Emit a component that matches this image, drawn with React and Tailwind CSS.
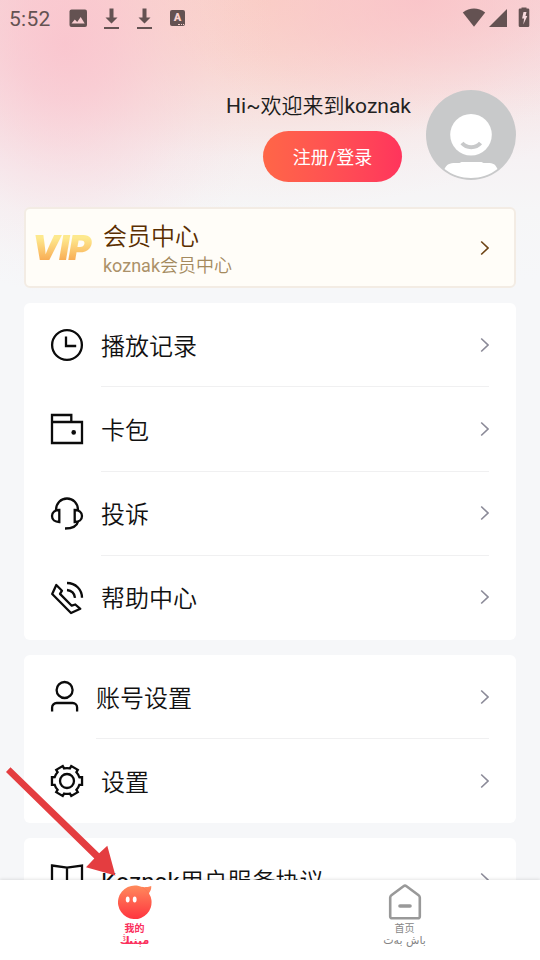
import React from "react";

const font = "font-[Roboto,'Noto_Sans_CJK_SC',sans-serif]";

function Chevron({ className = "text-[#8b8a98]" }) {
  return (
    <svg width="9" height="16" viewBox="0 0 9 16" fill="none" className={className}>
      <path d="M1.200 1.500l6.800 6.500-6.800 6.500" stroke="currentColor" strokeWidth="1.600" />
    </svg>
  );
}

function Icon({ w = 32, h = 32, children }) {
  return (
    <svg
      width={w}
      height={h}
      viewBox={`0 0 ${w} ${h}`}
      fill="none"
      stroke="#0b0b0b"
      strokeWidth="2.3"
      className="shrink-0 overflow-visible"
    >
      {children}
    </svg>
  );
}

const ClockIcon = () => (
  <Icon>
    <circle cx="16" cy="16" r="14.900" />
    <path d="M15 7.500V17h10.200" />
  </Icon>
);

const WalletIcon = () => (
  <Icon>
    <path d="M1 9h30v21H1zM1 9V2h19.300v7" />
    <circle cx="22.700" cy="19.400" r="2.300" fill="#0b0b0b" stroke="none" />
  </Icon>
);

const HeadsetIcon = () => (
  <Icon>
    <g transform="translate(0 -0.500)">
      <path d="M5 12.500C5 6 9.800 1 16 1s11 5 11 11.500" />
      <path d="M8.300 12.500v12C4 24.500 1 22.300 1 18.500s3-6 7.300-6z" />
      <path d="M23.700 12.500v12c4.300 0 7.300-2.200 7.300-6s-3-6-7.300-6z" />
      <path d="M27 24c-1 4.500-5.500 7-13 7" />
    </g>
  </Icon>
);

const PhoneIcon = () => (
  <Icon>
    <path d="M5.300 3L11 8.700l-2 3.200 11.700 11.800 3.600-1.200 5 4.300L20 31 1.200 12z" strokeLinejoin="round" />
    <path d="M16 1c8.500 0 15 6.500 15 14.800M16 8c4.500.5 7.500 3.500 8 7.800" />
  </Icon>
);

const UserIcon = () => (
  <Icon w={27} h={32}>
    <circle cx="13.600" cy="9" r="8" />
    <path d="M1.100 30.500v-4a4.500 4.500 0 0 1 4.500-4.500h16a4.500 4.500 0 0 1 4.500 4.500v4" />
  </Icon>
);

const at = (deg, r) => {
  const a = (deg * Math.PI) / 180;
  return `${(16 + r * Math.cos(a)).toFixed(2)} ${(16 + r * Math.sin(a)).toFixed(2)}`;
};
const gearPath =
  [0, 60, 120, 180, 240, 300]
    .map(
      (d, i) =>
        `${i ? "A12.5 12.5 0 0 1" : "M"}${at(d - 17, 12.9)}L${at(d - 14, 15.5)}L${at(d + 14, 15.5)}L${at(d + 17, 12.9)}`
    )
    .join("") + `A12.5 12.5 0 0 1 ${at(-17, 12.9)}Z`;

const GearIcon = () => (
  <Icon>
    <path d={gearPath} />
    <circle cx="16" cy="16" r="7" />
  </Icon>
);

const BookIcon = () => (
  <Icon>
    <path d="M1 1.500l15 2.200 15-2.200v26l-15 2.500-15-2.500zM16 3.700V30" />
  </Icon>
);

function Row({ icon, label, last }) {
  return (
    <div className="flex h-[84.25px] items-center pl-[27px]">
      {icon}
      <div
        className={`ml-[18px] mr-[27px] flex h-full flex-1 items-center justify-between border-b ${
          last ? "border-transparent" : "border-[#f0f0f1]"
        }`}
      >
        <span className="whitespace-nowrap pt-[4px] text-2xl font-[350] leading-8 text-[#111]">{label}</span>
        <Chevron />
      </div>
    </div>
  );
}

function StatusBar() {
  return (
    <div className="flex h-9 items-center justify-between pl-[9px] pr-[10px] text-[#645252]">
      <div className="flex items-center">
        <span className="w-[60px] pt-[2px] text-[21px] leading-[34px] tracking-[0.3px]">5:52</span>
        <svg width="18" height="18" viewBox="0 0 18 18">
          <rect x="0.500" y="0.500" width="17.500" height="17.500" rx="2" fill="currentColor" />
          <path d="M2.500 14.500l3.300-4 2.400 2.500 3.500-5 4 6.500z" fill="#f8ccd0" />
        </svg>
        {[0, 1].map((i) => (
          <svg key={i} width="16" height="22" viewBox="0 0 16 22" className="ml-[17px]" fill="currentColor">
            <path d="M5.500 1.500h4v9h4l-6 6-6-6h4zM.0 20h15v2H0z" />
          </svg>
        ))}
        <div className="relative ml-[17px] flex h-4 w-[15px] items-center justify-center rounded-[2px] bg-[#645252] pb-[1px] text-[11px] font-black leading-none text-[#f9d3cf]">
          A
          <span className="absolute bottom-[1px] right-[1px] h-px w-[6px] border-t border-dotted border-[#f9d3cf]" />
        </div>
      </div>
      <svg width="68" height="22" viewBox="0 0 68 22" fill="currentColor">
        <path d="M.8 5.500C7.500.3 16.500.3 23.200 5.500L12 19.700z" />
        <path d="M45 2v18H27z" />
        <path d="M59.500 1.500V.5h5v1h1.500a1.300 1.300 0 0 1 1.300 1.300v15.900A1.300 1.300 0 0 1 66 20h-8a1.300 1.300 0 0 1-1.300-1.300V2.800A1.300 1.300 0 0 1 58 1.500z" />
        <path d="M61.500 5h3l-1 4h1.800l-4 8.500.8-6h-2z" fill="#f7dadd" />
      </svg>
    </div>
  );
}

function Avatar() {
  return (
    <svg width="90" height="90" viewBox="0 0 90 90">
      <circle cx="45" cy="45" r="45" fill="#c8c9ca" />
      <circle cx="45" cy="44.800" r="20.800" fill="#fff" />
      <path d="M36 53c4.500 5.500 14 5.500 18.500 0" fill="none" stroke="#c8c9ca" strokeWidth="4" />
      <path d="M18.500 79c2-4.500 5-6 11-6h4l2-1h20l2 1h4c6 0 8 1.500 10 6-15 12-38 12-53 0z" fill="#fff" />
    </svg>
  );
}

function NavItem({ icon, zh, ug, className }) {
  return (
    <div className={`flex flex-1 flex-col items-center pr-px pt-1 ${className}`}>
      {icon}
      <span className="mt-[3px] text-[10px] leading-[10px]">{zh}</span>
      <span dir="rtl" className="mt-[1px] font-['DejaVu_Sans',sans-serif] text-[11px] leading-[12px]">
        {ug}
      </span>
    </div>
  );
}

export default function App() {
  return (
    <div
      className={`relative flex h-[960px] w-[540px] flex-col overflow-hidden bg-[#f6f7f9] ${font} bg-[radial-gradient(ellipse_210px_250px_at_65px_45px,#fac1cccc_0%,#fac3cea8_22%,#f9c9d270_45%,#f8d2da33_70%,#f8d8df0f_88%,#f8dde300_100%),radial-gradient(ellipse_260px_130px_at_420px_0px,#fac1c7cc_0%,#fac2c890_30%,#fac4ca48_60%,#fac4c914_85%,#fac4c900_100%),radial-gradient(ellipse_400px_210px_at_260px_0px,#fad0c4f5_0%,#fad2c7c8_25%,#f9d6cd78_50%,#f8dcd62c_75%,#f8e0dc00_100%),linear-gradient(180deg,#f7dade_0px,#f6e3e6_60px,#f6ebed_110px,#f6f2f4_160px,#f6f6f7_210px,#f6f7f9_280px)]`}
    >
      <StatusBar />

      <header className="flex justify-end gap-[15px] pr-6 pt-[54px]">
        <div className="flex flex-col items-end">
          <span className="h-[41px] text-[21px] leading-[32px] text-[#222]">
            Hi~<span className="font-[350] text-[#1a1a1a]">欢迎来到</span>koznak
          </span>
          <button className="mr-[9px] h-[51px] w-[139px] rounded-full bg-linear-to-r from-[#ff6647] to-[#ff345c] pt-[2px] text-lg text-white">
            注册/登录
          </button>
        </div>
        <Avatar />
      </header>

      <main className="flex flex-1 flex-col gap-[15px] px-6 pt-[25px]">
        <section className="flex h-[81px] shrink-0 items-center rounded-md border-2 border-[#f3ece4] bg-[#fffdf8] pl-2 pr-[25px]">
          <div className="w-[69px]">
            <span className="-ml-[2px] inline-block origin-left scale-x-[1.04] bg-linear-to-b from-[#fde98e] from-25% to-[#f8ad55] to-80% bg-clip-text pr-1 font-[Inter,sans-serif] text-[34px] font-black italic leading-[40px] tracking-[-1px] text-transparent">
              VIP
            </span>
          </div>
          <div className="flex flex-1 flex-col pt-[4px]">
            <span className="text-2xl font-[350] leading-[32px] text-[#5a2e00]">会员中心</span>
            <span className="text-lg leading-[25px] text-[#ab9169]">
              koznak<span className="font-[350] text-[#a48a5e]">会员中心</span>
            </span>
          </div>
          <Chevron className="text-[#6d4315]" />
        </section>

        <section className="shrink-0 rounded-md bg-white">
          <Row icon={<ClockIcon />} label="播放记录" />
          <Row icon={<WalletIcon />} label="卡包" />
          <Row icon={<HeadsetIcon />} label="投诉" />
          <Row icon={<PhoneIcon />} label="帮助中心" last />
        </section>

        <section className="h-[168px] shrink-0 rounded-md bg-white">
          <Row icon={<UserIcon />} label="账号设置" />
          <Row icon={<GearIcon />} label="设置" last />
        </section>

        <section className="h-[84px] shrink-0 rounded-md bg-white">
          <Row
            icon={<BookIcon />}
            label={
              <>
                <span className="font-normal">Koznak</span>用户服务协议
              </>
            }
            last
          />
        </section>
      </main>

      <nav className="absolute inset-x-0 bottom-0 flex h-20 bg-white shadow-[0_-1px_3px_rgba(0,0,0,0.1)]">
        <NavItem
          className="font-bold text-[#fb2f5c]"
          zh="我的"
          ug="مېنىڭ"
          icon={
            <svg width="36" height="37" viewBox="0 0 36 37">
              <defs>
                <linearGradient id="face" x1="0" y1="0" x2="0" y2="1">
                  <stop offset="0" stopColor="#ff8a5c" />
                  <stop offset="1" stopColor="#ff343f" />
                </linearGradient>
              </defs>
              <path
                d="M18 1.500c2.600 0 5 .6 7.100 1.600 3 .3 6.400-.1 9.100-1.100.3 2.700-.6 5.200-2.300 7.200A16.800 16.800 0 1 1 18 1.500z"
                fill="url(#face)"
              />
              <path d="M25.500 3.300c2 1.400 4.600 3.500 6.200 6.300" stroke="#fa7550" strokeWidth=".8" fill="none" />
              <ellipse cx="10.700" cy="15.500" rx="1.900" ry="3" fill="#fff" />
              <ellipse cx="17.700" cy="15.500" rx="1.900" ry="3" fill="#fff" />
            </svg>
          }
        />
        <NavItem
          className="text-[#858585]"
          zh="首页"
          ug="باش بەت"
          icon={
            <svg width="34" height="37" viewBox="0 0 34 37" fill="none" stroke="#999" strokeLinejoin="round" strokeLinecap="round">
              <path d="M2.200 13.500a3 3 0 0 1 1.200-2.200L15.500 2.200a2.500 2.500 0 0 1 3 0l12.100 9.100a3 3 0 0 1 1.200 2.200V32.500a1.800 1.800 0 0 1-1.800 1.800H4a1.800 1.800 0 0 1-1.800-1.800z" strokeWidth="2.600" />
              <path d="M12 22h10" strokeWidth="3.600" />
            </svg>
          }
        />
      </nav>

      <svg className="pointer-events-none absolute left-0 top-[760px]" width="130" height="120" viewBox="0 760 130 120">
        <path d="M10.500 767.300L99.200 853.300 107.300 845.700 115.400 875.500 86 867.300 94.300 858.600 6 772z" fill="#e43d40" />
      </svg>
    </div>
  );
}
